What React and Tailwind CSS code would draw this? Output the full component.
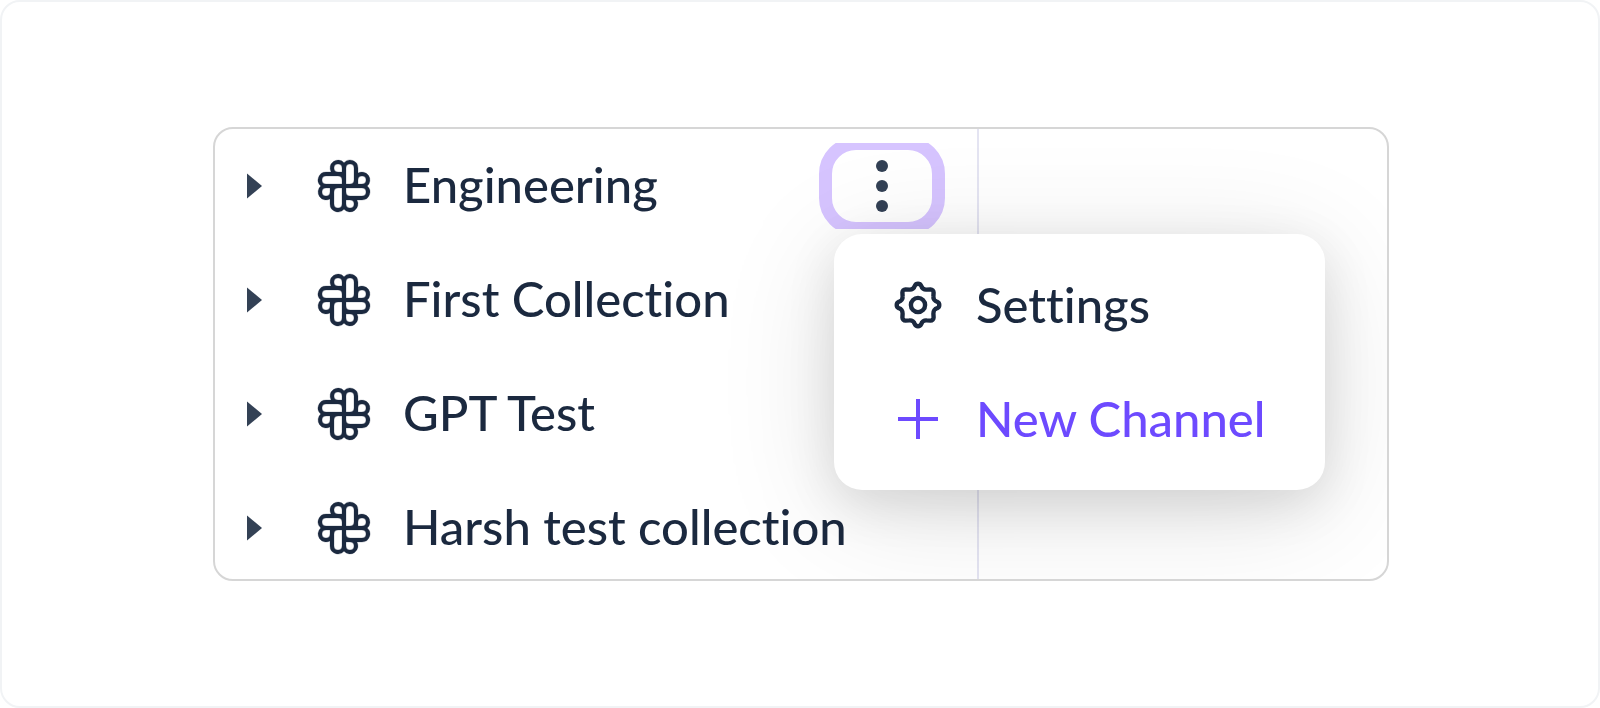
import React, { useState } from "react";
import { PiSlackLogo } from "react-icons/pi";

const collections = ["Engineering", "First Collection", "GPT Test", "Harsh test collection"];

function Caret() {
  return (
    <svg viewBox="0 0 15 26" className="h-[26px] w-[15px]" aria-hidden="true">
      <path d="M0 .5 15 13 0 25.5Z" fill="#334155" />
    </svg>
  );
}

function GearIcon() {
  return (
    <svg
      viewBox="-26 -26 52 52"
      className="size-[52px] shrink-0"
      fill="none"
      stroke="#1b293f"
      strokeWidth="4.4"
      strokeLinejoin="round"
      aria-hidden="true"
    >
      <circle r="7.1" />
      <path d="M-3.2-19.2A3.5 3.5 0 0 1 3.2-19.2A5 5 0 0 0 8.6-15.4L12.6-15.6A3 3 0 0 1 15.6-12.6L15.4-8.6A5 5 0 0 0 19.2-3.2A3.5 3.5 0 0 1 19.2 3.2A5 5 0 0 0 15.4 8.6L15.6 12.6A3 3 0 0 1 12.6 15.6L8.6 15.4A5 5 0 0 0 3.2 19.2A3.5 3.5 0 0 1-3.2 19.2A5 5 0 0 0-8.6 15.4L-12.6 15.6A3 3 0 0 1-15.6 12.6L-15.4 8.6A5 5 0 0 0-19.2 3.2A3.5 3.5 0 0 1-19.2-3.2A5 5 0 0 0-15.4-8.6L-15.6-12.6A3 3 0 0 1-12.6-15.6L-8.6-15.4A5 5 0 0 0-3.2-19.2Z" />
    </svg>
  );
}

function PlusIcon() {
  return (
    <svg viewBox="-26 -26 52 52" className="size-[52px] shrink-0" stroke="#6d4aff" strokeWidth="4" aria-hidden="true">
      <path d="M-20 0H20M0-20V20" />
    </svg>
  );
}

function ActionMenu() {
  return (
    <div
      role="menu"
      className="absolute top-[91px] left-[15px] z-10 flex w-[491px] flex-col gap-3.5 rounded-[28px] bg-white py-[21px] pl-[58px] shadow-[0_20px_120px_rgba(0,0,0,0.12),0_14px_50px_rgba(0,0,0,0.11)]"
    >
      <button role="menuitem" className="flex h-[100px] items-center gap-8 text-left">
        <GearIcon />
        <span className="pb-0.5">Settings</span>
      </button>
      <button role="menuitem" className="flex h-[100px] items-center gap-8 text-left text-[#6d4aff]">
        <PlusIcon />
        <span className="pb-0.5">New Channel</span>
      </button>
    </div>
  );
}

function MoreButton() {
  const [open, setOpen] = useState(true);
  return (
    <div className="relative shrink-0">
      <button
        aria-label="More actions"
        aria-expanded={open}
        onClick={() => setOpen(!open)}
        className="flex h-[86px] w-[126px] items-center justify-center overflow-hidden"
      >
        <span className="flex h-[98px] w-full shrink-0 items-center justify-center rounded-[37px] border-[13px] border-[#d6c4ff]">
          <svg viewBox="0 0 12 52" className="h-[52px] w-3" fill="#334155" aria-hidden="true">
            <circle cx="6" cy="6" r="6" />
            <circle cx="6" cy="26" r="6" />
            <circle cx="6" cy="46" r="6" />
          </svg>
        </span>
      </button>
      {open && <ActionMenu />}
    </div>
  );
}

export default function App() {
  return (
    <div className="flex min-h-screen items-center justify-center rounded-[20px] border-2 border-[#f1f3f5] bg-white pr-6 pb-px pl-[26px] font-['Lato',sans-serif] text-[49px] leading-[60px] font-medium whitespace-nowrap text-[#1b293f] [font-variant-ligatures:none]">
      <main className="flex w-full max-w-[1176px] overflow-hidden rounded-[20px] border-2 border-[#d6d6d6]">
        <nav className="w-[764px] shrink-0 border-r-2 border-[#e4e4f2] pt-[7px] pb-px">
          <ul className="flex flex-col gap-3.5">
            {collections.map((name, i) => (
              <li key={name} className="flex h-[100px] items-center pr-8 pl-8">
                <button aria-label={"Expand " + name}>
                  <Caret />
                </button>
                <a href="#" className="flex grow items-center pl-[50px]">
                  <PiSlackLogo className="size-16 shrink-0 stroke-current stroke-1" />
                  <span className="pb-[3px] pl-[27px]">{name}</span>
                </a>
                {i === 0 && <MoreButton />}
              </li>
            ))}
          </ul>
        </nav>
        <section className="grow" />
      </main>
    </div>
  );
}
